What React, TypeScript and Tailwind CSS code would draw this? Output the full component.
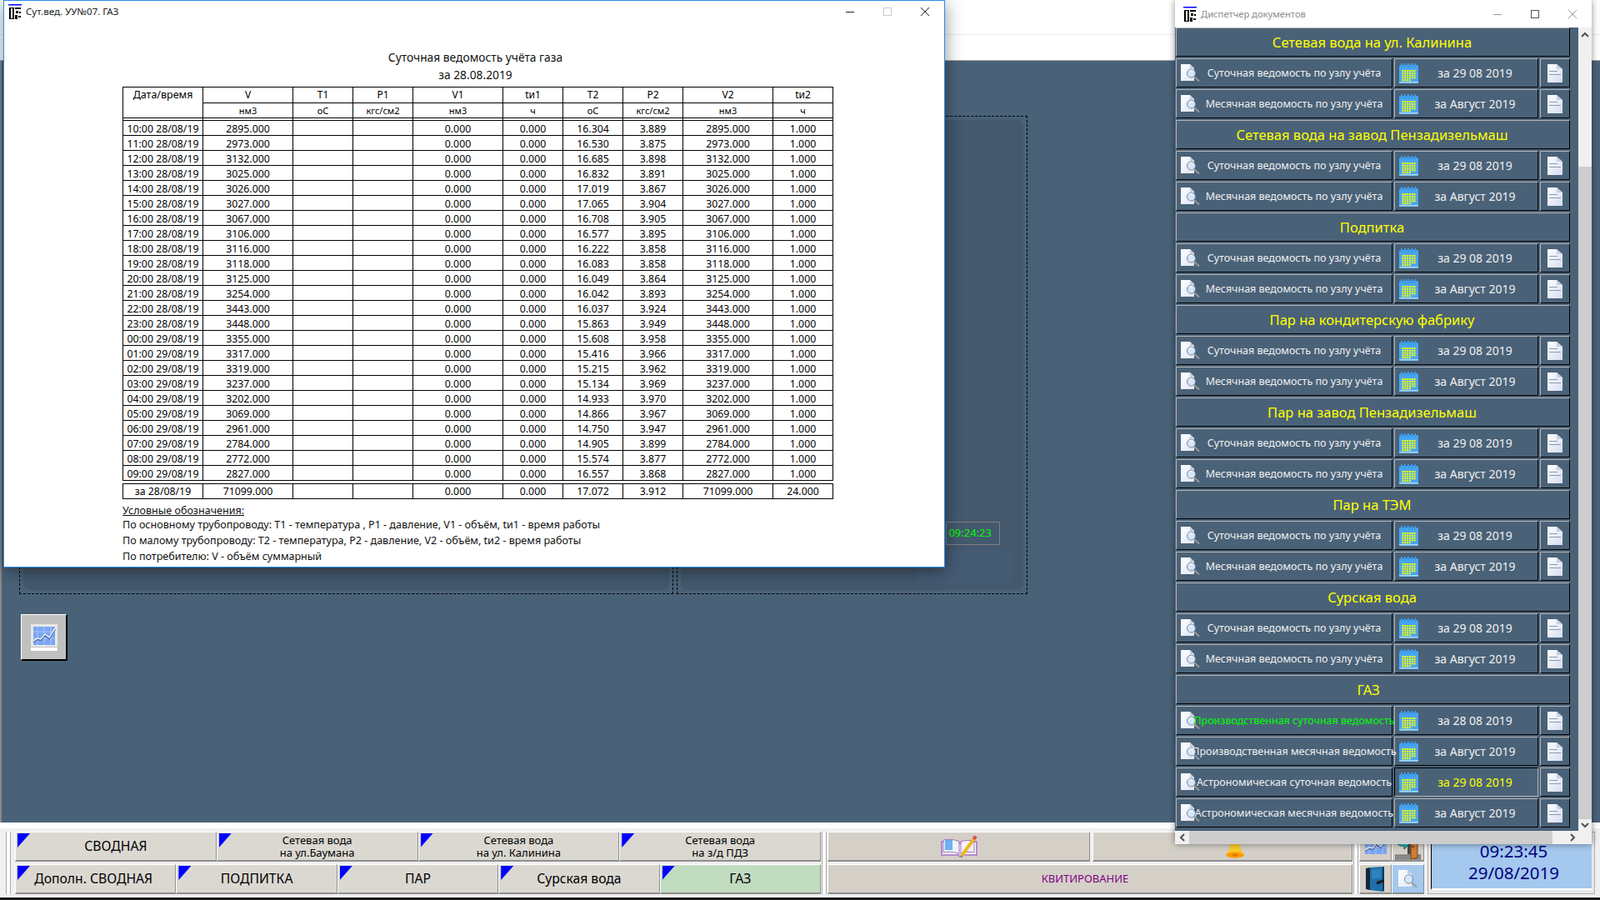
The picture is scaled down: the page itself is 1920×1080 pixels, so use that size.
import React from 'react';

const hours = [
  ['10:00 28/08/19', '2895', '16.304', '3.889'],
  ['11:00 28/08/19', '2973', '16.530', '3.875'],
  ['12:00 28/08/19', '3132', '16.685', '3.898'],
  ['13:00 28/08/19', '3025', '16.832', '3.891'],
  ['14:00 28/08/19', '3026', '17.019', '3.867'],
  ['15:00 28/08/19', '3027', '17.065', '3.904'],
  ['16:00 28/08/19', '3067', '16.708', '3.905'],
  ['17:00 28/08/19', '3106', '16.577', '3.895'],
  ['18:00 28/08/19', '3116', '16.222', '3.858'],
  ['19:00 28/08/19', '3118', '16.083', '3.858'],
  ['20:00 28/08/19', '3125', '16.049', '3.864'],
  ['21:00 28/08/19', '3254', '16.042', '3.893'],
  ['22:00 28/08/19', '3443', '16.037', '3.924'],
  ['23:00 28/08/19', '3448', '15.863', '3.949'],
  ['00:00 29/08/19', '3355', '15.608', '3.958'],
  ['01:00 29/08/19', '3317', '15.416', '3.966'],
  ['02:00 29/08/19', '3319', '15.215', '3.962'],
  ['03:00 29/08/19', '3237', '15.134', '3.969'],
  ['04:00 29/08/19', '3202', '14.933', '3.970'],
  ['05:00 29/08/19', '3069', '14.866', '3.967'],
  ['06:00 29/08/19', '2961', '14.750', '3.947'],
  ['07:00 29/08/19', '2784', '14.905', '3.899'],
  ['08:00 29/08/19', '2772', '15.574', '3.877'],
  ['09:00 29/08/19', '2827', '16.557', '3.868'],
];

const heads = ['V', 'T1', 'P1', 'V1', 'tи1', 'T2', 'P2', 'V2', 'tи2'];
const units = ['нм3', 'оС', 'кгс/см2', 'нм3', 'ч', 'оС', 'кгс/см2', 'нм3', 'ч'];

const daily = 'Суточная ведомость по узлу учёта';
const monthly = 'Месячная ведомость по узлу учёта';

type DocRow = { label: string; date: string; labelCls?: string; dateCls?: string; pressed?: boolean };

const plain = (date: string): DocRow[] => [
  { label: daily, date },
  { label: monthly, date: 'за Август 2019' },
];

const groups: { title: string; rows: DocRow[] }[] = [
  { title: 'Сетевая вода на ул. Калинина', rows: plain('за 29 08 2019') },
  { title: 'Сетевая вода на завод Пензадизельмаш', rows: plain('за 29 08 2019') },
  { title: 'Подпитка', rows: plain('за 29 08 2019') },
  { title: 'Пар на кондитерскую фабрику', rows: plain('за 29 08 2019') },
  { title: 'Пар на завод Пензадизельмаш', rows: plain('за 29 08 2019') },
  { title: 'Пар на ТЭМ', rows: plain('за 29 08 2019') },
  { title: 'Сурская вода', rows: plain('за 29 08 2019') },
  {
    title: 'ГАЗ\u00a0\u00a0',
    rows: [
      { label: 'Производственная суточная ведомость', date: 'за 28 08 2019', labelCls: 'text-[#00ff00]' },
      { label: 'Производственная месячная ведомость', date: 'за Август 2019' },
      { label: 'Астрономическая суточная ведомость', date: 'за 29 08 2019', dateCls: 'text-[#ffff00]', pressed: true },
      { label: 'Астрономическая месячная ведомость', date: 'за Август 2019' },
    ],
  },
];

function AppIcon() {
  return (
    <svg width="16" height="18" viewBox="0 0 16 18" className="shrink-0">
      <rect x="0" y="0" width="16" height="1.5" fill="#0000ff" />
      <rect x="1" y="4" width="6" height="14" fill="#000" />
      <rect x="3" y="5" width="2" height="12" fill="#fff" />
      <rect x="8" y="4" width="7" height="2" fill="#000" />
      <rect x="9" y="8" width="3" height="3" fill="#000" />
      <rect x="13" y="9" width="2" height="2" fill="#000" />
      <rect x="8" y="13" width="3" height="5" fill="#000" />
      <rect x="12" y="14" width="3" height="2" fill="#000" />
    </svg>
  );
}

function WinButtons({ maxCls, otherCls }: { maxCls: string; otherCls: string }) {
  return (
    <div className="ml-auto flex items-center">
      <svg width="46" height="12" viewBox="0 0 46 12" className={otherCls}>
        <path d="M18 6.5h10" stroke="currentColor" fill="none" />
      </svg>
      <svg width="44" height="12" viewBox="0 0 44 12" className={maxCls}>
        <rect x="17.5" y="1.5" width="9" height="9" stroke="currentColor" fill="none" />
      </svg>
      <svg width="46" height="12" viewBox="0 0 46 12" className={otherCls}>
        <path d="M18 1l10 10M28 1L18 11" stroke="currentColor" fill="none" />
      </svg>
    </div>
  );
}

function DocSearchIcon() {
  return (
    <svg width="24" height="22" viewBox="0 0 24 22" className="shrink-0">
      <defs>
        <linearGradient id="pg" x1="0" y1="0" x2="1" y2="1">
          <stop offset="0" stopColor="#ffffff" />
          <stop offset="1" stopColor="#dfe5f4" />
        </linearGradient>
      </defs>
      <path d="M0 0h11l5 5v15H0z" fill="url(#pg)" />
      <path d="M11 0v5h5z" fill="#c8cfe2" />
      <circle cx="12.500" cy="11" r="5" fill="#d5e6fb" stroke="#76879c" strokeWidth="1" />
      <path d="M10 8.500a3.500 3.500 0 0 1 4-0.500" stroke="#ffffff" fill="none" />
      <path d="M16 15l6 5.500" stroke="#9a9a9a" strokeWidth="2" />
    </svg>
  );
}

function CalendarIcon() {
  const xs = [3.500, 6.300, 9.100, 11.900, 14.700, 17.500];
  const ys = [8, 10.800, 13.600, 16.400, 19.200];
  return (
    <svg width="23" height="24" viewBox="0 0 23 24" className="shrink-0">
      <rect x="0" y="2" width="23" height="22" rx="2" fill="#47a6f2" />
      <rect x="0" y="22" width="23" height="1.500" fill="#a8d8fb" />
      {[2, 6, 10, 14, 18].map((x) => (
        <rect key={x} x={x} y="0" width="2" height="5" fill="#3b9ae8" />
      ))}
      {ys.map((y, i) =>
        xs.map((x, j) =>
          i === 4 && j > 3 ? null : <rect key={`${x}-${y}`} x={x} y={y} width="2" height="2" fill="#ffff00" />,
        ),
      )}
    </svg>
  );
}

function DocIcon() {
  return (
    <svg width="18" height="22" viewBox="0 0 18 22" className="shrink-0">
      <defs>
        <linearGradient id="dg" x1="0" y1="0" x2="1" y2="1">
          <stop offset="0" stopColor="#ffffff" />
          <stop offset="1" stopColor="#d6dcf0" />
        </linearGradient>
      </defs>
      <path d="M0 0h11l7 6v16H0z" fill="url(#dg)" />
      <path d="M11 0v6h7z" fill="#c9d0e4" />
      <path d="M2 8.500h10M2 12.500h14" stroke="#8b98b8" strokeWidth="1" />
    </svg>
  );
}

function ChartIcon({ framed }: { framed?: boolean }) {
  return (
    <svg width="32" height="32" viewBox="0 0 32 32">
      {framed && <rect x="0" y="0" width="32" height="27" fill="#e8e8e8" />}
      {framed && <rect x="0" y="28" width="32" height="4" fill="#fff" />}
      <rect x="3" y="3" width="26" height="22" fill="#7ba6f2" />
      <path d="M8 3v22M16 3v22M24 3v22M3 9h26M3 17h26" stroke="#a4c4f6" />
      <path d="M3 20l5-3 4 1 5-6 5 4 7-11" stroke="#3f5a98" strokeWidth="2" fill="none" transform="translate(0 1)" />
      <path d="M3 20l5-3 4 1 5-6 5 4 7-11" stroke="#e8eef8" strokeWidth="1.500" fill="none" />
    </svg>
  );
}

function BookIcon() {
  return (
    <svg width="46" height="27" viewBox="0 0 46 27">
      <path d="M1 8h20l2 2 2-2h18v16H25l-2 2-2-2H1z" fill="#fff" stroke="#b58bc8" strokeWidth="2" />
      <path d="M3 6c6-1 14-1 19 2v15c-5-3-13-3-19-2z" fill="#eef2f8" stroke="#a070b8" />
      <path d="M5 6h9v12H5z" fill="#6fb0ee" />
      <path d="M24 8c5-2 11-2 16-1v14c-5-1-11-1-16 2z" fill="#f4f0f8" stroke="#a070b8" />
      <path d="M25 25L41 3" stroke="#e8b820" strokeWidth="4" />
      <path d="M39.500 5L42 1.500" stroke="#e05050" strokeWidth="4" />
      <path d="M25 25l-1 2 2-1z" fill="#222" />
    </svg>
  );
}

function BellIcon() {
  return (
    <svg width="24" height="20" viewBox="0 0 24 20">
      <path d="M6 0h12c0 6 1 11 4 14H2C5 11 6 6 6 0z" fill="#fccb2e" />
      <ellipse cx="12" cy="16" rx="11" ry="3.500" fill="#ff9a00" />
      <ellipse cx="12" cy="16" rx="3" ry="1.500" fill="#d97800" />
    </svg>
  );
}

function DoorIcon() {
  return (
    <svg width="32" height="32" viewBox="0 0 32 32">
      <defs>
        <pattern id="hatch" width="2" height="2" patternUnits="userSpaceOnUse">
          <rect width="2" height="2" fill="#9a9a9a" />
          <rect width="1" height="1" fill="#555" />
        </pattern>
      </defs>
      <rect x="0" y="25" width="31" height="7" fill="url(#hatch)" />
      <rect x="15" y="0" width="12" height="25" fill="#4a4a4a" />
      <path d="M19 3l8-3v29l-8 2z" fill="#cf7d35" stroke="#7a4514" />
      <circle cx="21.500" cy="16" r="1" fill="#222" />
      <path d="M2 10h9V6l7 6-7 7v-4H6l-4-3z" fill="#15c4c4" stroke="#222" strokeWidth="0.700" />
    </svg>
  );
}

function BinderIcon() {
  return (
    <svg width="24" height="30" viewBox="0 0 24 30">
      <path d="M0 2l5-1v27l-5 -1z" fill="#15243a" />
      <path d="M5 1l15-1v30L5 28z" fill="#1f6ea8" />
      <path d="M7 4l11-1v10l-11 2z" fill="#2f84c0" />
      <path d="M20 0h2v29l-2 1z" fill="#0e3a5e" />
      <path d="M13 18l9-3v3l-7 3h-2z" fill="#1a1a1a" />
    </svg>
  );
}

function DocRowView({ row }: { row: DocRow }) {
  const cell = 'h-[35px] border border-t-[#b6b6b6] border-l-[#b6b6b6] border-b-black border-r-black';
  const pressed = 'h-[35px] border border-t-black border-l-black border-b-[#b6b6b6] border-r-[#b6b6b6]';
  return (
    <div className="flex gap-[2px]">
      <div className={`${cell} relative flex w-[260px] items-center pl-[5px]`}>
        <DocSearchIcon />
        <div className="absolute inset-y-0 left-[24px] flex w-[234px] items-center justify-center pt-[2px]">
          <span className={`text-[12.500px] whitespace-nowrap ${row.labelCls ?? 'text-[#f0f0f0]'}`}>{row.label}</span>
        </div>
      </div>
      <div className={`${row.pressed ? pressed : cell} flex w-[173px] items-center pl-[5px]`}>
        <CalendarIcon />
        <span className={`flex-1 pr-[7px] text-center text-[14px] whitespace-nowrap ${row.dateCls ?? 'text-[#f0f0f0]'}`}>{row.date}</span>
      </div>
      <div className={`${cell} flex w-[36px] items-center justify-center`}>
        <DocIcon />
      </div>
    </div>
  );
}

function DocManager() {
  return (
    <div className="absolute left-[1410px] top-0 flex h-[1013px] w-[500px] flex-col bg-[#f0f0f0] shadow-[0_0_8px_rgba(0,0,0,0.45)]">
      <div className="flex h-[33px] shrink-0 items-center bg-white pl-[10px] text-[11.200px] text-[#8c8c8c] [font-family:'Noto_Sans',sans-serif]">
        <AppIcon />
        <span className="ml-[5px] pt-[1px]">Диспетчер документов</span>
        <WinButtons maxCls="text-[#555]" otherCls="text-[#999]" />
      </div>
      <div className="flex min-h-0 flex-1">
        <div className="flex w-[484px] flex-col gap-[2px] bg-[#4a6278] pl-[1px]">
          {groups.map((g) => (
            <React.Fragment key={g.title}>
              <div className="flex h-[35px] w-[473px] shrink-0 items-center justify-center border border-t-[#b6b6b6] border-l-[#b6b6b6] border-b-black border-r-black pt-[2px] pr-[2px] text-[16.500px] text-[#ffff00]">
                {g.title}
              </div>
              {g.rows.map((r, i) => (
                <DocRowView key={i} row={r} />
              ))}
            </React.Fragment>
          ))}
        </div>
        <div className="flex w-[16px] flex-col bg-[#f0f0f0]">
          <div className="flex h-[167px] justify-center pt-[5px] text-[#505050]">
            <svg width="10" height="8" viewBox="0 0 10 8"><path d="M1 6l4-4 4 4" stroke="currentColor" strokeWidth="2" fill="none" /></svg>
          </div>
          <div className="flex-1 bg-[#cdcdcd]" />
          <div className="flex h-[14px] justify-center pt-[3px] text-[#505050]">
            <svg width="10" height="8" viewBox="0 0 10 8"><path d="M1 2l4 4 4-4" stroke="currentColor" strokeWidth="2" fill="none" /></svg>
          </div>
        </div>
      </div>
      <div className="flex h-[16px] shrink-0 items-center bg-[#f0f0f0] text-[#505050]">
        <div className="flex w-[17px] justify-center">
          <svg width="8" height="10" viewBox="0 0 8 10"><path d="M6 1L2 5l4 4" stroke="currentColor" strokeWidth="2" fill="none" /></svg>
        </div>
        <div className="h-full w-[436px] bg-[#cdcdcd]" />
        <div className="flex w-[47px] justify-center">
          <svg width="8" height="10" viewBox="0 0 8 10"><path d="M2 1l4 4-4 4" stroke="currentColor" strokeWidth="2" fill="none" /></svg>
        </div>
      </div>
    </div>
  );
}

function Cols() {
  return (
    <colgroup>
      <col className="w-[96px]" />
      <col className="w-[108px]" />
      <col className="w-[72px]" />
      <col className="w-[72px]" />
      <col className="w-[108px]" />
      <col className="w-[72px]" />
      <col className="w-[72px]" />
      <col className="w-[72px]" />
      <col className="w-[108px]" />
      <col className="w-[72px]" />
    </colgroup>
  );
}

function ReportWindow() {
  const line = 'border border-black p-0 text-center align-middle';
  const dataCell = 'border border-black px-0 pt-[4px] pb-0 text-center align-middle';
  const totalCell = 'border border-black px-0 pt-[2px] pb-0 text-center align-middle';
  return (
    <div className="absolute left-[4px] top-0 flex h-[681px] w-[1130px] flex-col border border-[#2b8be8] bg-white shadow-[0_4px_20px_rgba(0,0,0,0.45)] [font-family:'Liberation_Sans',sans-serif]">
      <div className="flex h-[26px] items-center pl-[5px] text-[11.500px] text-[#222] [font-family:'Noto_Sans',sans-serif]">
        <AppIcon />
        <span className="ml-[5px]">Сут.вед. УУ№07. ГАЗ</span>
        <WinButtons maxCls="text-[#ccc]" otherCls="text-[#222]" />
      </div>
      <div className="mt-[31px] flex flex-col items-center pl-[3px] text-[13.800px] leading-[21px] text-[#111]">
        <div>Суточная ведомость учёта газа</div>
        <div>за 28.08.2019</div>
      </div>
      <div className="mt-[4px] pl-[142px] text-black">
        <table className="w-[852px] table-fixed border-collapse">
          <Cols />
          <thead>
            <tr className="h-[19px] text-[12px] leading-none">
              <th rowSpan={2} className={`${line} pt-[3px] align-top text-[12.500px] font-normal`}>Дата/время</th>
              {heads.map((h, i) => (
                <th key={i} className={`${line} font-normal`}>{h}</th>
              ))}
            </tr>
            <tr className="h-[18px] text-[11px] leading-none">
              {units.map((h, i) => (
                <th key={i} className={`${line} pb-[1px] font-normal`}>{h}</th>
              ))}
            </tr>
            <tr className="h-[3px]">
              {Array.from({ length: 10 }).map((_, i) => (
                <th key={i} className="border-x border-black p-0" />
              ))}
            </tr>
          </thead>
          <tbody className="text-[12.300px] leading-none">
            {hours.map(([t, v, t2, p2]) => (
              <tr key={t} className="h-[18px]">
                <td className={dataCell}>{t}</td>
                <td className={dataCell}>{v}.000</td>
                <td className={dataCell} />
                <td className={dataCell} />
                <td className={dataCell}>0.000</td>
                <td className={dataCell}>0.000</td>
                <td className={dataCell}>{t2}</td>
                <td className={dataCell}>{p2}</td>
                <td className={dataCell}>{v}.000</td>
                <td className={dataCell}>1.000</td>
              </tr>
            ))}
          </tbody>
        </table>
        <table className="mt-[3px] w-[852px] table-fixed border-collapse text-[12.300px] leading-none">
          <Cols />
          <tbody>
            <tr className="h-[18px]">
              {['за 28/08/19', '71099.000', '', '', '0.000', '0.000', '17.072', '3.912', '71099.000', '24.000'].map((c, i) => (
                <td key={i} className={totalCell}>{c}</td>
              ))}
            </tr>
          </tbody>
        </table>
        <div className="mt-[6px] text-[12.550px] text-[#111]">
          <div className="leading-[16px] underline">Условные обозначения:</div>
          <div className="leading-[18px]">По основному трубопроводу: T1 - температура , P1 - давление, V1 - объём, tи1 - время работы</div>
          <div className="leading-[20px]">По малому трубопроводу: T2 - температура, P2 - давление, V2 - объём, tи2 - время работы</div>
          <div className="leading-[18px]">По потребителю: V - объём суммарный</div>
        </div>
      </div>
    </div>
  );
}

function Tab({ active, small, children }: { active?: boolean; small?: boolean; children: React.ReactNode }) {
  return (
    <div
      className={`relative flex items-center justify-center border-t border-l border-t-white border-l-white border-b-2 border-r border-b-[#8e8e8e] border-r-[#8e8e8e] text-center text-black ${active ? 'bg-[#c0dcc0]' : 'bg-[#dbd8d2]'} ${small ? 'text-[13px] leading-[15px]' : 'pt-[1px] text-[15.700px]'}`}
    >
      <span className="absolute left-[2px] top-[1px] h-[17px] w-[15px] bg-[#0000ff] [clip-path:polygon(0_0,100%_0,0_100%)]" />
      <div>{children}</div>
    </div>
  );
}

function DoubleRule() {
  return <div className="h-full w-[6px] shrink-0 border-x border-x-[#a8a8a8] bg-white" />;
}

function BottomBar() {
  const plate = 'flex items-center justify-center border-t border-l border-t-white border-l-white border-b-2 border-r border-b-[#8e8e8e] border-r-[#8e8e8e]';
  return (
    <div className="flex h-[83px] items-stretch gap-[1px] bg-[#f0f0f0] py-[4px] pl-[7px] [font-family:'Liberation_Sans',sans-serif]">
      <DoubleRule />
      <div className="ml-[4px] flex w-[967px] shrink-0 flex-col gap-[3px]">
        <div className="grid h-[36px] grid-cols-4">
          <Tab>СВОДНАЯ</Tab>
          <Tab small>Сетевая вода<br />на ул.Баумана</Tab>
          <Tab small>Сетевая вода<br />на ул. Калинина</Tab>
          <Tab small>Сетевая вода<br />на з/д ПДЗ</Tab>
        </div>
        <div className="grid h-[36px] grid-cols-5">
          <Tab><span className="pr-[5px]">Дополн. СВОДНАЯ</span></Tab>
          <Tab>ПОДПИТКА</Tab>
          <Tab>ПАР</Tab>
          <Tab>Сурская вода</Tab>
          <Tab active>ГАЗ</Tab>
        </div>
      </div>
      <DoubleRule />
      <div className="flex w-[630px] shrink-0 flex-col gap-[3px]">
        <div className="flex h-[36px] gap-[3px]">
          <div className={`${plate} w-[315px] bg-[#d4d0c8] pl-[2px]`}><BookIcon /></div>
          <div className={`${plate} flex-1 bg-[#d4d0c8] pl-[30px] pt-[8px]`}><BellIcon /></div>
        </div>
        <div className={`${plate} h-[36px] bg-[#d4d0c8] pr-[12px] text-[13px] text-[#800080]`}>КВИТИРОВАНИЕ</div>
      </div>
      <DoubleRule />
      <div className="flex w-[78px] shrink-0 flex-col gap-[3px]">
        <div className="grid h-[36px] grid-cols-2">
          <div className={`${plate} bg-[#d4d0c8]`}><ChartIcon /></div>
          <div className={`${plate} bg-[#d4d0c8]`}><DoorIcon /></div>
        </div>
        <div className="grid h-[36px] grid-cols-2">
          <div className={`${plate} bg-[#d4d0c8]`}><BinderIcon /></div>
          <div className={`${plate} bg-[#a4c8ee]`}><DocSearchIcon /></div>
        </div>
      </div>
      <div className="ml-[3px] w-[201px] shrink-0 border border-[#b0b0b0] bg-[#e8e8e8] px-[3px] pt-[3px] pb-[4px]">
        <div className="flex h-full flex-col items-center justify-center border-l border-b-2 border-l-black border-b-white bg-[#a4c8ee] pl-[5px] text-[20.500px] leading-[26px] text-[#000080]">
          <div>09:23:45</div>
          <div>29/08/2019</div>
        </div>
      </div>
    </div>
  );
}

function DashedPanel({ width, children }: { width: string; children?: React.ReactNode }) {
  return (
    <div className={`${width} h-[574px] border border-dashed border-black p-[4px]`}>
      <div className="relative h-full w-full rounded-[8px] bg-[#44596e]">{children}</div>
    </div>
  );
}

export default function App() {
  return (
    <div className="relative flex h-[1080px] w-[1920px] flex-col overflow-hidden bg-[#4a6278] [font-family:'Liberation_Sans',sans-serif]">
      <div className="h-[73px] shrink-0 border-b border-b-[#a8a8a8] bg-white pt-[41px]">
        <div className="h-[1px] bg-[#ececec]" />
      </div>
      <div className="min-h-0 flex-1 border-l-2 border-l-[#8a8a8a] pl-[21px] pt-[66px]">
        <div className="flex gap-[4px]">
          <DashedPanel width="w-[785px]" />
          <DashedPanel width="w-[421px]">
            <div className="absolute left-[318px] top-[482px] flex h-[28px] w-[65px] items-center justify-end border border-[#808080] pr-[9px] text-[13px] text-[#00ff00]">
              09:24:23
            </div>
            <div className="absolute bottom-[8px] left-[282px] h-[40px] w-[115px] bg-[#455b74]" />
          </DashedPanel>
        </div>
        <div className="ml-[2px] mt-[24px] flex h-[56px] w-[56px] items-center justify-center border-t border-l border-t-white border-l-white border-b-2 border-r-2 border-b-black border-r-black bg-[#c0c0c0]">
          <ChartIcon framed />
        </div>
      </div>
      <div className="h-[7px] shrink-0 bg-white" />
      <BottomBar />
      <div className="h-[3px] shrink-0 bg-[#1a1a1a]" />
      <ReportWindow />
      <DocManager />
    </div>
  );
}
